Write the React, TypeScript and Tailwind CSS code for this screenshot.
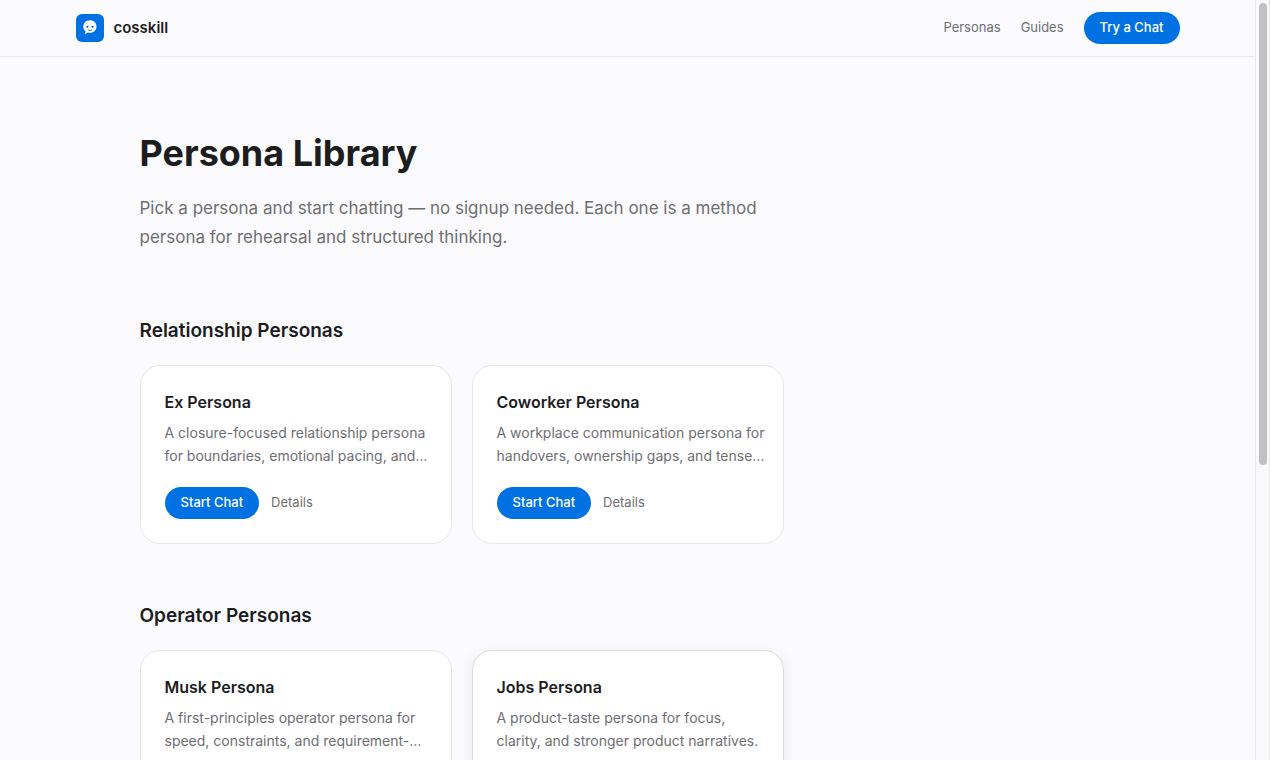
type Persona = {
  name: string;
  description: string;
  active?: boolean;
};

const SECTIONS: { title: string; personas: Persona[] }[] = [
  {
    title: "Relationship Personas",
    personas: [
      {
        name: "Ex Persona",
        description: "A closure-focused relationship persona for boundaries, emotional pacing, and…",
      },
      {
        name: "Coworker Persona",
        description: "A workplace communication persona for handovers, ownership gaps, and tense…",
      },
    ],
  },
  {
    title: "Operator Personas",
    personas: [
      {
        name: "Musk Persona",
        description: "A first-principles operator persona for speed, constraints, and requirement-…",
      },
      {
        name: "Jobs Persona",
        description: "A product-taste persona for focus, clarity, and stronger product narratives.",
        active: true,
      },
    ],
  },
];

function Logo() {
  return (
    <svg viewBox="0 0 28 28" className="size-7" aria-hidden="true">
      <rect width="28" height="28" rx="6" fill="#0071e3" />
      <path
        d="M14 6.2c3.9 0 6.5 2.8 6.5 6.3s-2.6 6.3-6.5 6.3c-.8 0-1.500-.1-2.200-.3L9 20.300l.6-3C8 16.200 7.300 14.500 7.300 12.500c0-3.500 2.800-6.300 6.700-6.300Z"
        fill="#fff"
      />
      <circle cx="11.4" cy="12.8" r="1.1" fill="#0071e3" />
      <circle cx="16.6" cy="12.8" r="1.1" fill="#0071e3" />
      <path d="M12.2 15.9c1 .9 2.600.9 3.600 0" fill="none" stroke="#0071e3" strokeWidth="0.9" strokeLinecap="round" />
    </svg>
  );
}

function Header() {
  return (
    <header className="border-b border-[#e8e8ea]">
      <div className="mx-auto flex h-14 max-w-6xl items-center justify-between px-6">
        <a href="#" className="flex items-center gap-2.5">
          <Logo />
          <span className="text-[15px] font-semibold">cosskill</span>
        </a>
        <nav className="flex items-center gap-5 text-[13px] text-[#6e6e73]">
          <a href="#personas">Personas</a>
          <a href="#guides">Guides</a>
          <button type="button" className="h-8 rounded-full bg-[#0071e3] px-4 font-medium text-white">
            Try a Chat
          </button>
        </nav>
      </div>
    </header>
  );
}

function PersonaCard({ persona }: { persona: Persona }) {
  return (
    <article
      className={`rounded-[20px] border bg-white py-6 pr-4 pl-6 ${
        persona.active ? "border-[#dcdcdf] shadow-[0_4px_16px_rgba(0,0,0,0.08)]" : "border-[#e8e8ea]"
      }`}
    >
      <h3 className="text-base leading-6 font-semibold">{persona.name}</h3>
      <p className="mt-[7px] text-sm leading-[23px] text-[#6e6e73]">{persona.description}</p>
      <div className="mt-5 flex items-center gap-3 text-[13px]">
        <button type="button" className="h-8 rounded-full bg-[#0071e3] px-4 font-medium text-white">
          Start Chat
        </button>
        <a href="#details" className="text-[#6e6e73]">
          Details
        </a>
      </div>
    </article>
  );
}

export default function App() {
  return (
    <div className="flex h-screen bg-[#fbfbfd] font-[Inter,'Liberation_Sans',sans-serif] text-[#1d1d1f] antialiased">
      <div className="min-w-0 flex-1 overflow-y-auto [scrollbar-width:none]">
        <Header />
        <main className="mx-auto max-w-5xl px-6 pt-18">
          <h1 className="text-4xl leading-12 font-bold">Persona Library</h1>
          <p className="mt-[17px] max-w-2xl text-[17px] leading-[29px] text-[#6e6e73]">
            Pick a persona and start chatting — no signup needed. Each one is a method persona for rehearsal and
            structured thinking.
          </p>
          <div className="mt-16 space-y-[57px]" id="personas">
            {SECTIONS.map((section) => (
              <section key={section.title}>
                <h2 className="text-[19px] leading-[29px] font-semibold">{section.title}</h2>
                <div className="mt-5 grid grid-cols-3 gap-5">
                  {section.personas.map((persona) => (
                    <PersonaCard key={persona.name} persona={persona} />
                  ))}
                </div>
              </section>
            ))}
          </div>
        </main>
      </div>
      {/* scrollbar track */}
      <div className="w-[15px] border-x border-[#e8e8e8] bg-[#fafafa] px-[3px] py-[3px]" aria-hidden="true">
        <div className="h-[61.3%] w-2 rounded-full bg-[#c1c1c1]" />
      </div>
    </div>
  );
}
